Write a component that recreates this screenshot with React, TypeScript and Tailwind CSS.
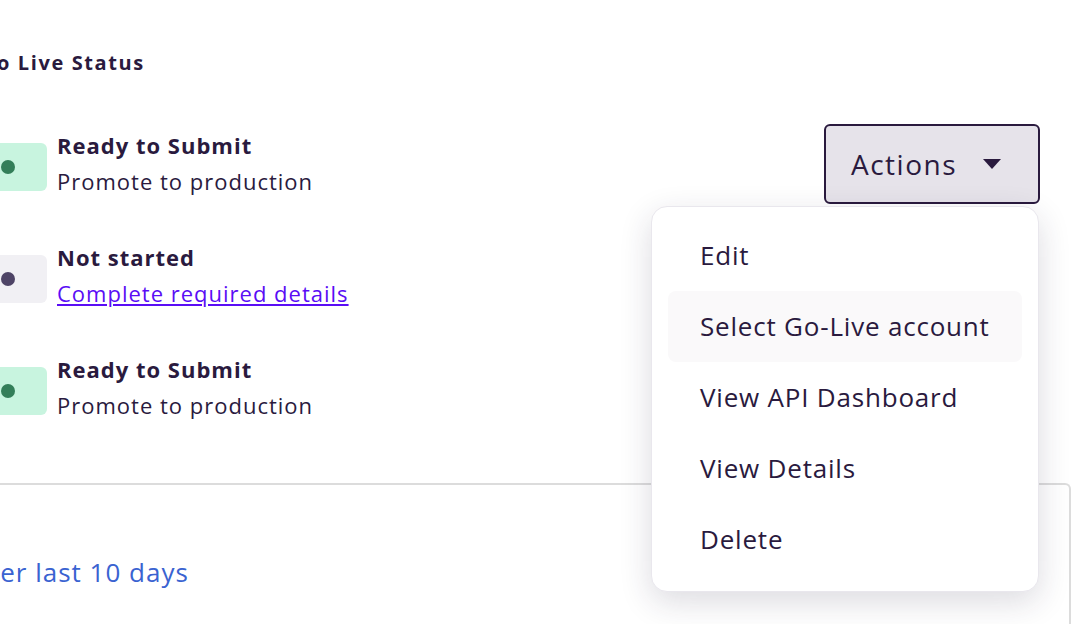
const rows = [
  { title: "Ready to Submit", sub: "Promote to production", tone: "green" },
  { title: "Not started", sub: "Complete required details", tone: "gray" },
  { title: "Ready to Submit", sub: "Promote to production", tone: "green" },
];

const menu = ["Edit", "Select Go-Live account", "View API Dashboard", "View Details", "Delete"];

function Badge({ tone }: { tone: string }) {
  return (
    <div
      className={
        tone === "green"
          ? "mt-[16px] h-[48px] w-[80px] shrink-0 rounded-md bg-[#c8f4df] pl-[34px] flex items-center"
          : "mt-[16px] h-[48px] w-[80px] shrink-0 rounded-md bg-[#f1f0f4] pl-[34px] flex items-center"
      }
    >
      <span
        className={
          tone === "green"
            ? "block h-[14px] w-[14px] rounded-full bg-[#337e59]"
            : "block h-[14px] w-[14px] rounded-full bg-[#4e4466]"
        }
      />
    </div>
  );
}

export default function App() {
  return (
    <div
      className="relative h-[624px] w-[1072px] overflow-hidden bg-white text-[#2a1a3e]"
      style={{ fontFamily: "'Open Sans', Lato, sans-serif" }}
    >
      <div className="-ml-[33px] pt-[51px]">
        <h2 className="ml-[14px] text-[20px] font-bold leading-[24px] tracking-[1.6px]">Go Live Status</h2>

        <div className="mt-[52px] flex flex-col gap-[40px]">
          {rows.map((r, i) => (
            <div key={i} className="flex h-[72px] items-start justify-between pr-[32px]">
              <div className="flex items-start gap-[10px]">
                <Badge tone={r.tone} />
                <div className="flex flex-col tracking-[1px]">
                  <span className="text-[22px] font-bold leading-[36px]">{r.title}</span>
                  {r.tone === "gray" ? (
                    <a href="#" className="text-[22px] leading-[36px] text-[#5a0df5] underline underline-offset-2">
                      {r.sub}
                    </a>
                  ) : (
                    <span className="text-[22px] leading-[36px]">{r.sub}</span>
                  )}
                </div>
              </div>
              {i === 0 && (
                <button className="-mt-[3px] flex h-[80px] w-[216px] shrink-0 items-center gap-[26px] rounded-md border-2 border-[#2a1a3e] bg-[#e6e3ea] pl-[25px] text-[28px] tracking-[1.5px]">
                  <span>Actions</span>
                  <svg width="18" height="10" viewBox="0 0 18 10">
                    <path d="M0 0h18L9 10z" fill="#2a1a3e" />
                  </svg>
                </button>
              )}
            </div>
          ))}
        </div>

        <div className="mt-[60px] mr-[1px] h-[200px] rounded-tr-md border-t-2 border-r-2 border-[#dcdcdc]">
          <p className="pt-[69px] -ml-[2px] text-[26px] leading-[36px] tracking-[1px] text-[#3a63d1]">Over last 10 days</p>
        </div>
      </div>

      <div className="absolute left-[651px] top-[206px] w-[388px] rounded-2xl border border-[#e9e7ed] bg-white pt-[13px] pb-[16px] shadow-[0_10px_32px_rgba(40,30,60,0.16)]">
        {menu.map((m, i) => (
          <div
            key={m}
            className={
              i === 1
                ? "mx-[16px] flex h-[71px] items-center rounded-lg bg-[#faf9fa] pl-[32px] text-[26px] tracking-[0.8px]"
                : "mx-[16px] flex h-[71px] items-center rounded-lg pl-[32px] text-[26px] tracking-[0.8px]"
            }
          >
            {m}
          </div>
        ))}
      </div>
    </div>
  );
}
